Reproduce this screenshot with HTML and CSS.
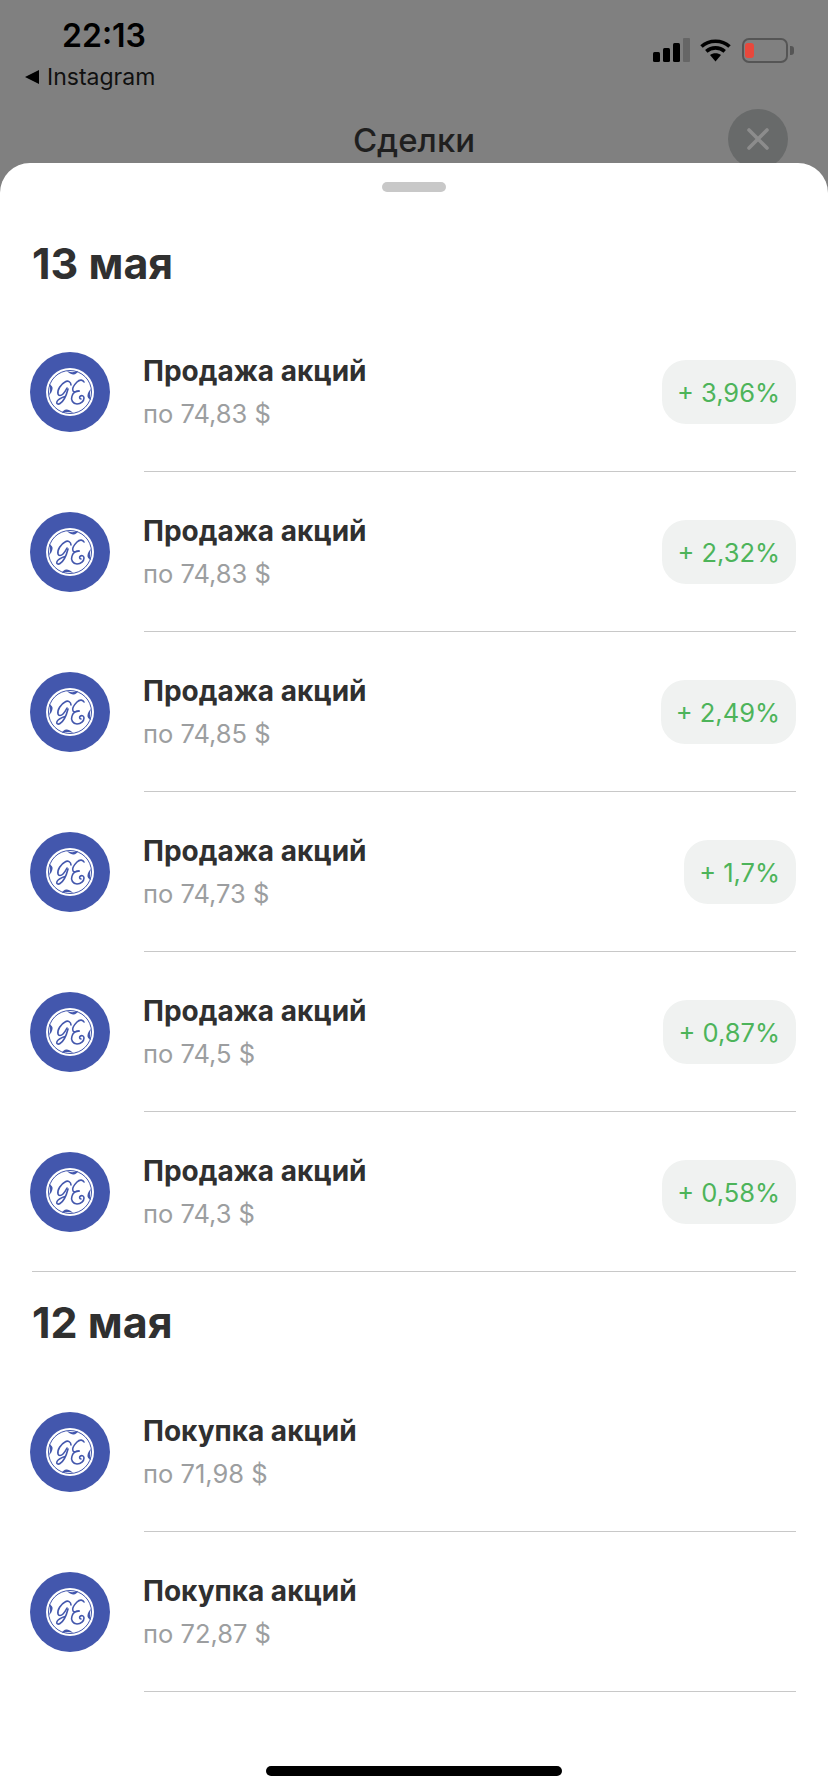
FILE: index.html
```html
<!DOCTYPE html>
<html lang="en">
<head>
  <meta charset="UTF-8">
  <title>Сделки</title>
  <link rel="stylesheet" href="styles.css">
</head>
<body>
  <svg class="defs" width="0" height="0">
    <symbol id="ge" viewBox="0 0 80 80">
      <circle cx="40" cy="40" r="40" fill="#4357ad"/>
      <circle cx="40" cy="40" r="24" fill="#fff"/>
      <circle cx="40" cy="40" r="21.500" fill="none" stroke="#4357ad" stroke-width="1"/>
      <g fill="#4357ad">
        <path id="hook" d="M37 19c3 1.500 7 1.500 11 0-1 2.500-3 4-5 3.500-2.500-.5-4.500-1.500-6-3.500z"/>
        <path transform="rotate(90 40 40)" d="M37 19c3 1.500 7 1.500 11 0-1 2.500-3 4-5 3.500-2.500-.5-4.500-1.500-6-3.500z"/>
        <path transform="rotate(180 40 40)" d="M37 19c3 1.500 7 1.500 11 0-1 2.500-3 4-5 3.500-2.500-.5-4.500-1.500-6-3.500z"/>
        <path transform="rotate(270 40 40)" d="M37 19c3 1.500 7 1.500 11 0-1 2.500-3 4-5 3.500-2.500-.5-4.500-1.500-6-3.500z"/>
      </g>
      <g fill="none" stroke="#4357ad" stroke-width="1.600" stroke-linecap="round">
        <path d="M41 33c0-3-3-5-6-3-4 2-8 8-7 12 .5 2 3 2 5 0 2-2 3-4 4-6"/>
        <path d="M38 37c-1 4-4 12-8 14.500-2 1.500-4 0-3-2 1-2 5-4 8-5"/>
        <path d="M54 30c-1-2-4-3-7 0-3 3-5 7-4 9 1 1 3 1 6 0"/>
        <path d="M49 39c-3-.5-6 2-7 5-1.500 4 1 8 5 8 4 0 7-3 7-6 0-2-2-3-3.500-2-1.500 1-1 3 .5 3"/>
      </g>
    </symbol>
  </svg>

  <div class="phone">
    <div class="status-bar">
      <div class="status-left">
        <div class="time">22:13</div>
        <div class="back-app"><span class="back-arrow"></span>Instagram</div>
      </div>
      <div class="status-icons">
        <svg width="37" height="24" viewBox="0 0 37 24">
          <rect x="0" y="14" width="7" height="10" rx="1.500" fill="#000"/>
          <rect x="10" y="10" width="7" height="14" rx="1.500" fill="#000"/>
          <rect x="20" y="5" width="7" height="19" rx="1.500" fill="#000"/>
          <rect x="30" y="0" width="7" height="24" rx="1" fill="#666"/>
        </svg>
        <svg width="31" height="24" viewBox="0 0 31 24">
          <path d="M1.500 8.500C9 1.500 22 1.500 29.500 8.500M6.300 13.300C11.500 8.700 19.500 8.700 24.700 13.300" fill="none" stroke="#000" stroke-width="3.600"/>
          <path d="M10 17L15.500 23.500 21 17C18 14.500 13 14.500 10 17z" fill="#000"/>
        </svg>
        <div class="battery"><div class="battery-body"><div class="battery-level"></div></div><div class="battery-tip"></div></div>
      </div>
    </div>

    <div class="top-bar">
      <div class="top-title">Сделки</div>
      <div class="close-btn">
        <svg width="22" height="22" viewBox="0 0 22 22"><path d="M2 2l18 18M20 2L2 20" stroke="#8c8c8c" stroke-width="3.600" stroke-linecap="round"/></svg>
      </div>
    </div>

    <div class="sheet">
      <div class="handle"></div>
      <h2 class="day first">13 мая</h2>
      <div class="deal">
        <svg class="logo"><use href="#ge"/></svg>
        <div class="deal-main">
          <div class="deal-info"><div class="deal-title">Продажа акций</div><div class="deal-price">по 74,83 $</div></div>
          <div class="pill">+ 3,96%</div>
        </div>
      </div>
      <div class="deal">
        <svg class="logo"><use href="#ge"/></svg>
        <div class="deal-main">
          <div class="deal-info"><div class="deal-title">Продажа акций</div><div class="deal-price">по 74,83 $</div></div>
          <div class="pill">+ 2,32%</div>
        </div>
      </div>
      <div class="deal">
        <svg class="logo"><use href="#ge"/></svg>
        <div class="deal-main">
          <div class="deal-info"><div class="deal-title">Продажа акций</div><div class="deal-price">по 74,85 $</div></div>
          <div class="pill">+ 2,49%</div>
        </div>
      </div>
      <div class="deal">
        <svg class="logo"><use href="#ge"/></svg>
        <div class="deal-main">
          <div class="deal-info"><div class="deal-title">Продажа акций</div><div class="deal-price">по 74,73 $</div></div>
          <div class="pill">+ 1,7%</div>
        </div>
      </div>
      <div class="deal">
        <svg class="logo"><use href="#ge"/></svg>
        <div class="deal-main">
          <div class="deal-info"><div class="deal-title">Продажа акций</div><div class="deal-price">по 74,5 $</div></div>
          <div class="pill">+ 0,87%</div>
        </div>
      </div>
      <div class="deal last">
        <svg class="logo"><use href="#ge"/></svg>
        <div class="deal-main">
          <div class="deal-info"><div class="deal-title">Продажа акций</div><div class="deal-price">по 74,3 $</div></div>
          <div class="pill">+ 0,58%</div>
        </div>
      </div>
      <div class="day-line"></div>
      <h2 class="day">12 мая</h2>
      <div class="deal">
        <svg class="logo"><use href="#ge"/></svg>
        <div class="deal-main">
          <div class="deal-info"><div class="deal-title">Покупка акций</div><div class="deal-price">по 71,98 $</div></div>
        </div>
      </div>
      <div class="deal">
        <svg class="logo"><use href="#ge"/></svg>
        <div class="deal-main">
          <div class="deal-info"><div class="deal-title">Покупка акций</div><div class="deal-price">по 72,87 $</div></div>
        </div>
      </div>
      <div class="home-bar"></div>
    </div>
  </div>
</body>
</html>
```

FILE: styles.css
```css
html, body {
  margin: 0;
  padding: 0;
}
body {
  font-family: Inter, "Noto Sans", Arial, sans-serif;
  background: #808080;
}
.defs {
  display: block;
  height: 0;
}
.phone {
  width: 828px;
  height: 1792px;
  overflow: hidden;
  display: flex;
  flex-direction: column;
}
.status-bar {
  height: 102px;
  display: flex;
  justify-content: space-between;
  box-sizing: border-box;
  padding: 17px 34px 0 25px;
}
.time {
  font-size: 32px;
  font-weight: 600;
  line-height: 38px;
  color: #000;
  margin-left: 37px;
}
.back-app {
  display: flex;
  align-items: center;
  font-size: 23px;
  line-height: 28px;
  color: #101010;
  margin-top: 8px;
}
.back-arrow {
  width: 0;
  height: 0;
  border-top: 7.500px solid transparent;
  border-bottom: 7.500px solid transparent;
  border-right: 14px solid #000;
  margin-right: 8px;
}
.status-icons {
  display: flex;
  align-items: center;
  gap: 10px;
  height: 26px;
  margin-top: 20px;
}
.battery {
  display: flex;
  align-items: center;
  margin-left: 1px;
}
.battery-body {
  width: 42px;
  height: 21px;
  border: 2px solid #555;
  border-radius: 7px;
  display: flex;
  align-items: center;
}
.battery-level {
  width: 9px;
  height: 15px;
  margin-left: 1px;
  border-radius: 3px;
  background: #e8483c;
}
.battery-tip {
  width: 4px;
  height: 9px;
  margin-left: 2px;
  border-radius: 0 3px 3px 0;
  background: #555;
}
.top-bar {
  height: 61px;
  position: relative;
  display: flex;
  justify-content: center;
}
.top-title {
  font-size: 33px;
  font-weight: 500;
  line-height: 44px;
  color: #1f1f1f;
  margin-top: 16px;
}
.close-btn {
  position: absolute;
  left: 728px;
  top: 7px;
  width: 60px;
  height: 60px;
  border-radius: 50%;
  background: #686a6a;
  display: flex;
  align-items: center;
  justify-content: center;
}
.sheet {
  position: relative;
  flex: 1;
  background: #fff;
  border-radius: 30px 30px 0 0;
}
.handle {
  width: 64px;
  height: 10px;
  margin: 19px auto 0;
  border-radius: 5px;
  background: #c8c8c8;
}
.day {
  margin: 0;
  padding-left: 32px;
  font-size: 43px;
  font-weight: 700;
  line-height: 52px;
  color: #303030;
}
.day.first {
  margin-top: 45px;
  margin-bottom: 63px;
}
.deal {
  display: flex;
  margin: 0 32px 40px 30px;
}
.deal.last {
  margin-bottom: 0;
}
.logo {
  width: 80px;
  height: 80px;
  flex: none;
}
.deal-main {
  flex: 1;
  height: 119px;
  margin-left: 34px;
  display: flex;
  align-items: flex-start;
  justify-content: space-between;
  border-bottom: 1px solid #c8c8c8;
}
.deal.last .deal-main {
  border-bottom: none;
}
.deal-info {
  margin-left: -1px;
}
.deal-title {
  font-size: 28px;
  font-weight: 700;
  line-height: 38px;
  color: #303030;
}
.deal-price {
  font-size: 25.500px;
  line-height: 34px;
  color: #9c9ea0;
  margin-top: 7px;
}
.pill {
  height: 64px;
  margin-top: 8px;
  padding: 0 16px 0 15px;
  display: flex;
  align-items: center;
  border-radius: 24px;
  background: #f0f2f1;
  color: #4db45a;
  font-size: 25.500px;
}
.day-line {
  height: 1px;
  background: #c8c8c8;
  margin: 0 32px;
}
.day-line + .day {
  margin-top: 24px;
  margin-bottom: 64px;
}
.home-bar {
  position: absolute;
  left: 266px;
  bottom: 16px;
  width: 296px;
  height: 10px;
  border-radius: 5px;
  background: #000;
}
```
